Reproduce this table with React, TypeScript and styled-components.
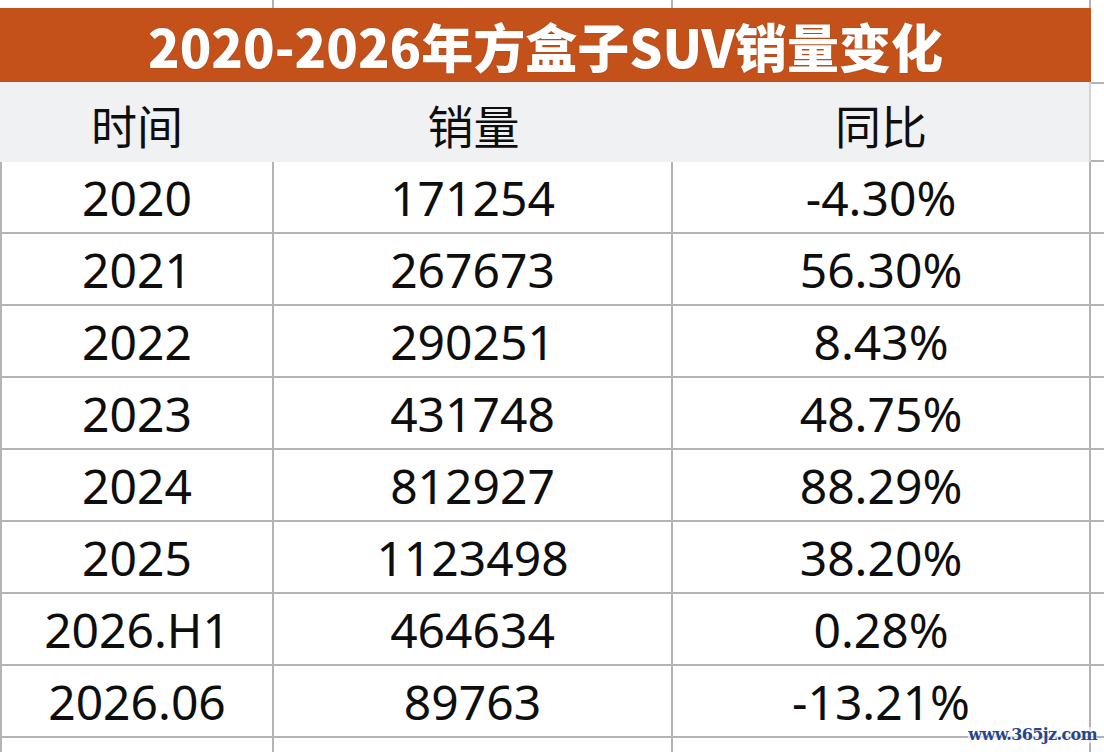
import React from "react";
import styled, { createGlobalStyle, css } from "styled-components";

const Global = createGlobalStyle`
  html, body { margin: 0; padding: 0; background: #ffffff; }
  body { font-family: "Noto Sans", "Noto Sans CJK SC", sans-serif; }
`;

const LINE = "#b3b3b7";

const Page = styled.div`
  position: relative;
  width: 1104px;
  height: 752px;
  overflow: hidden;
  background: #ffffff;
  display: flex;
  flex-direction: column;
`;

const Row = styled.div<{ $h: number }>`
  display: grid;
  grid-template-columns: 274px 399px 418px 1fr;
  height: ${(p) => p.$h}px;
  flex: none;
`;

const Cell = styled.div<{ $left?: boolean; $right?: boolean; $bottom?: boolean }>`
  box-sizing: border-box;
  display: flex;
  align-items: center;
  justify-content: center;
  font-family: "Noto Sans", "Noto Sans CJK SC", sans-serif;
  font-size: 48px;
  color: #0e0e0e;
  white-space: nowrap;
  ${(p) => p.$left && css`border-left: 2px solid ${LINE};`}
  ${(p) => p.$right && css`border-right: 2px solid ${LINE};`}
  ${(p) => p.$bottom && css`border-bottom: 2px solid ${LINE};`}
`;

const Banner = styled.div`
  grid-column: 1 / 4;
  background: #c4511a;
  display: flex;
  align-items: center;
  justify-content: center;
  color: #ffffff;
  font-family: "Noto Sans CJK SC", "Noto Sans", sans-serif;
  font-weight: 900;
  font-size: 52px;
  text-shadow: 0 0 1px rgba(80, 30, 0, 0.6);
  white-space: nowrap;
  border-bottom: 1px solid #a8461a;
  box-sizing: border-box;
`;

const HeadCell = styled.div<{ $right?: boolean }>`
  box-sizing: border-box;
  background: #f0f1f3;
  display: flex;
  align-items: center;
  justify-content: center;
  padding-top: 4px;
  font-family: "Noto Sans CJK SC", sans-serif;
  font-size: 46px;
  color: #0e0e0e;
  ${(p) => p.$right && css`border-right: 2px solid #d4d4d8;`}
`;

const Watermark = styled.div`
  position: absolute;
  right: 7px;
  bottom: 9px;
  font-family: "DejaVu Serif", serif;
  font-weight: bold;
  font-size: 16px;
  letter-spacing: -0.6px;
  color: #27468a;
  background: rgba(255, 255, 255, 0.6);
  line-height: 1;
`;

const data: [string, string, string][] = [
  ["2020", "171254", "-4.30%"],
  ["2021", "267673", "56.30%"],
  ["2022", "290251", "8.43%"],
  ["2023", "431748", "48.75%"],
  ["2024", "812927", "88.29%"],
  ["2025", "1123498", "38.20%"],
  ["2026.H1", "464634", "0.28%"],
  ["2026.06", "89763", "-13.21%"],
];

export default function App() {
  return (
    <>
      <Global />
      <Page>
        <Row $h={8}>
          <Cell $right />
          <Cell $right />
          <Cell $right />
          <Cell />
        </Row>
        <Row $h={74}>
          <Banner>2020-2026年方盒子SUV销量变化</Banner>
          <Cell $bottom />
        </Row>
        <Row $h={80}>
          <HeadCell>时间</HeadCell>
          <HeadCell>销量</HeadCell>
          <HeadCell $right>同比</HeadCell>
          <Cell $bottom />
        </Row>
        {data.map(([year, sales, yoy]) => (
          <Row $h={72} key={year}>
            <Cell $left $right $bottom>{year}</Cell>
            <Cell $right $bottom>{sales}</Cell>
            <Cell $right $bottom>{yoy}</Cell>
            <Cell $bottom />
          </Row>
        ))}
        <Row $h={20}>
          <Cell $left $right />
          <Cell $right />
          <Cell $right />
          <Cell />
        </Row>
        <Watermark>www.365jz.com</Watermark>
      </Page>
    </>
  );
}
